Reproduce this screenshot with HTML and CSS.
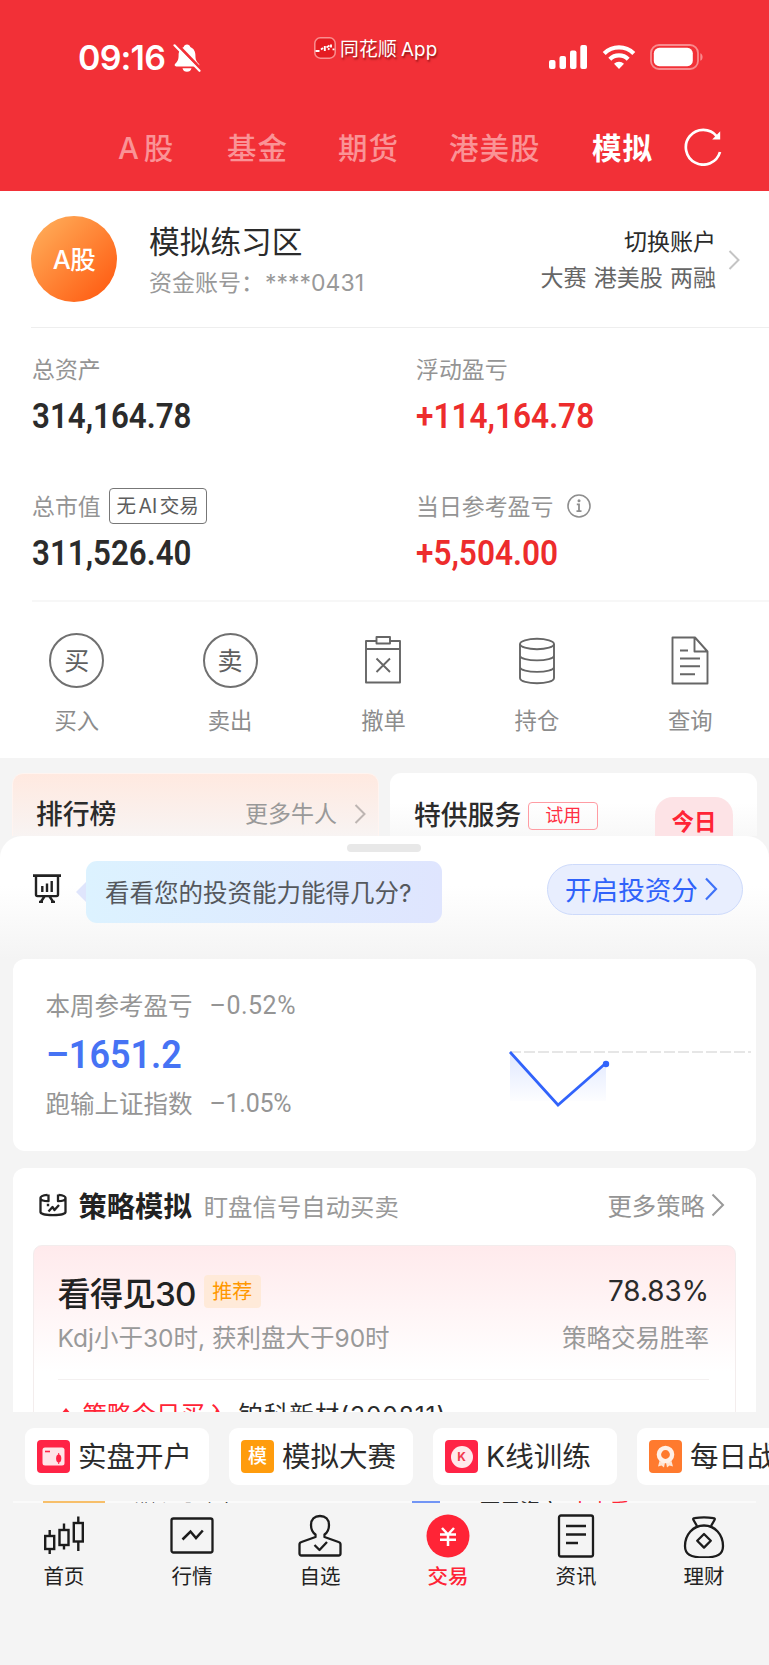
FILE: index.html
```html
<!DOCTYPE html>
<html lang="zh-CN">
<head>
<meta charset="utf-8">
<title>模拟交易</title>
<link rel="stylesheet" href="styles.css">
</head>
<body>
<div class="screen">
  <header class="top">
    <div class="status">
      <div class="clock">09:16</div>
      <svg class="bell" width="28" height="30" viewBox="0 0 28 30"><path d="M14 1.500c-1.800 0-3 1-3.300 2.400C7 5.500 5.600 8.600 5.600 12c0 5-1.200 6.500-3.400 8.800-1 1.100-.6 2.600 1 2.600h21.600c1.600 0 2-1.500 1-2.600-2.200-2.300-3.400-3.800-3.400-8.800 0-3.400-1.400-6.500-5.100-8.100C17 2.500 15.800 1.500 14 1.500zM9.500 25.200h9c-.5 2.300-2.200 3.600-4.500 3.600s-4-1.300-4.500-3.600z" fill="#fff"/><path d="M3.500.8l25 26" stroke="#f23037" stroke-width="3"/><path d="M1.500 2.300l25 25.500" stroke="#fff" stroke-width="2.200" stroke-linecap="round"/></svg>
      <div class="origin">
        <svg width="22" height="22" viewBox="0 0 22 22"><rect x=".8" y=".8" width="20.400" height="20.400" rx="5.500" fill="#e51c22" stroke="#f98f90" stroke-width="1.500"/><path d="M1.500 14h4M7 12.500l2-1.500M10.800 9v5M12.500 10.500l3-2M14 11.500l1.500 1M17 7.500v3M19.500 11.500v1.800" stroke="#fff" stroke-width="1.900" fill="none"/></svg>
        <span>同花顺 App</span>
      </div>
      <svg class="signal" width="38" height="24" viewBox="0 0 38 24" fill="#fff"><rect y="15" width="6.500" height="9" rx="2"/><rect x="10.500" y="11" width="6.500" height="13" rx="2"/><rect x="21" y="5.500" width="6.500" height="18.500" rx="2"/><rect x="31.300" width="6.700" height="24" rx="2"/></svg>
      <svg class="wifi" width="34" height="24" viewBox="0 0 34 24" fill="none" stroke="#fff" stroke-width="4.200"><path d="M2.200 8.500a21 21 0 0 1 29.600 0"/><path d="M7.800 14.200a13 13 0 0 1 18.400 0"/><path d="M17 24l-5-5.200a7.300 7.300 0 0 1 10 0z" fill="#fff" stroke="none"/></svg>
      <svg class="battery" width="54" height="26" viewBox="0 0 54 26"><rect x="1" y="1" width="47" height="24" rx="8" fill="none" stroke="#f98a8d" stroke-width="1.800"/><rect x="3.800" y="3.800" width="39" height="18.400" rx="5.500" fill="#fff"/><path d="M50.300 9.200c3 .8 3 6.800 0 7.600z" fill="#f98a8d"/></svg>
    </div>
    <nav class="markets">
      <span class="m1">A 股</span><span class="m2">基金</span><span class="m3">期货</span><span class="m4">港美股</span><span class="m5 on">模拟</span>
      <svg width="38" height="38" viewBox="0 0 38 38" fill="none" stroke="#fff" stroke-width="2.700"><path d="M36 24A17.400 17.400 0 1 1 32.800 8.300"/><path d="M36.200 3.200v8.300h-8z" fill="#fff" stroke="none"/></svg>
    </nav>
  </header>

  <section class="account">
    <div class="avatar">A股</div>
    <div class="who"><div class="name">模拟练习区</div><div class="no">资金账号：<b>****0431</b></div></div>
    <div class="switch"><div>切换账户</div><div class="kinds">大赛 港美股 两融</div></div>
    <svg width="12" height="20" viewBox="0 0 12 20" fill="none" stroke="#c4c4c4" stroke-width="2"><path d="M1.500 1l9 9-9 9"/></svg>
  </section>

  <section class="stats">
    <div class="stat"><div class="label">总资产</div><div class="num">314,164.78</div></div>
    <div class="stat"><div class="label">浮动盈亏</div><div class="num up">+114,164.78</div></div>
    <div class="stat"><div class="label">总市值<span class="ai">无 AI 交易</span></div><div class="num">311,526.40</div></div>
    <div class="stat"><div class="label">当日参考盈亏<svg class="info" width="24" height="24" viewBox="0 0 24 24" fill="none" stroke="#8e8e8e" stroke-width="1.600"><circle cx="12" cy="12" r="11"/><path d="M9.800 10.300H12V17M9.500 17.200h5" stroke-width="1.800"/><circle cx="12" cy="6.800" r="1.500" fill="#8e8e8e" stroke="none"/></svg></div><div class="num up">+5,504.00</div></div>
  </section>

  <section class="actions">
    <div class="act"><div class="pic"><div class="ring">买</div></div>买入</div>
    <div class="act"><div class="pic"><div class="ring">卖</div></div>卖出</div>
    <div class="act"><div class="pic"><svg width="38" height="50" viewBox="0 0 38 50" fill="none" stroke="#666" stroke-width="1.900" stroke-linejoin="round"><path d="M12 6H2v41.500h34V6H26M2 14h34"/><rect x="12.500" y="2" width="13.500" height="6.500"/><path d="M12.500 23.500l13.500 13.500M26 23.500L12.500 37"/></svg></div>撤单</div>
    <div class="act"><div class="pic"><svg width="38" height="50" viewBox="0 0 38 50" fill="none" stroke="#666" stroke-width="1.900"><ellipse cx="19" cy="9" rx="17" ry="5.200"/><path d="M2 9v34c0 7 34 7 34 0V9M2 20.500c0 6.500 34 6.500 34 0M2 32c0 6.500 34 6.500 34 0"/></svg></div>持仓</div>
    <div class="act"><div class="pic"><svg width="38" height="50" viewBox="0 0 38 50" fill="none" stroke="#666" stroke-width="1.900" stroke-linejoin="round"><path d="M1.500 2.500h22.500L36.500 16.500v32H1.500zM23.500 2.500v14h13"/><path d="M9 15.500h8M9 23.500h20M9 31.200h20M9 39.200h15"/></svg></div>查询</div>
  </section>

  <section class="promos">
    <div class="promo rank"><strong>排行榜</strong><span>更多牛人</span><svg width="12" height="20" viewBox="0 0 12 20" fill="none" stroke="#bdb5b2" stroke-width="2"><path d="M1.500 1l9 9-9 9"/></svg></div>
    <div class="promo serve"><strong>特供服务</strong><em>试用</em><div class="today">今日</div></div>
  </section>

  <section class="sheet">
    <div class="grip"></div>
    <div class="quiz">
      <svg class="board" width="28" height="29" viewBox="0 0 28 29" fill="none" stroke="#222" stroke-width="2.400"><path d="M0 1.700h28" stroke-width="2.800"/><path d="M3 2v18.500c0 1 .5 1.600 1.500 1.600h19c1 0 1.500-.6 1.500-1.600V2M11.500 22.500l-4 5.700M16.500 22.500l4 5.700M6 28h4M18 28h4"/><path d="M9.300 12v6M14 9.500V18M18.700 7v11"/></svg>
      <svg class="beak" width="10" height="20" viewBox="0 0 10 20"><path d="M10 0v20L0 10z" fill="#dfe5fc"/></svg>
      <div class="bubble">看看您的投资能力能得几分?</div>
      <div class="open">开启投资分<svg width="14" height="24" viewBox="0 0 14 24" fill="none" stroke="#3f72f8" stroke-width="2.200"><path d="M2 1.500L12 12 2 22.500"/></svg></div>
    </div>

    <div class="card week">
      <div class="figures">
        <div class="line">本周参考盈亏<i>–0.52%</i></div>
        <div class="loss">–1651.2</div>
        <div class="line">跑输上证指数<i class="tight">–1.05%</i></div>
      </div>
      <svg width="243" height="62" viewBox="0 0 243 62"><defs><linearGradient id="fade" x1="0" y1="0" x2="0" y2="1"><stop stop-color="#e0e8ff"/><stop offset="1" stop-color="#fff"/></linearGradient></defs><path d="M2 6v48h96V18L50 58z" fill="url(#fade)"/><path d="M2 5h241" stroke="#e6e6e6" stroke-width="2.200" stroke-dasharray="11 3"/><path d="M2 5l48 53 48-42" fill="none" stroke="#3163fb" stroke-width="2.700"/><circle cx="98" cy="17" r="3.200" fill="#3163fb"/></svg>
    </div>

    <div class="card plan">
      <div class="plan-head">
        <svg width="28" height="24" viewBox="0 0 28 24" fill="none" stroke="#222" stroke-width="2.300" stroke-linejoin="round"><path d="M8.500 1.800C5 2.200 1.500 3 1.500 4.800V19c0 4.200 25 4.200 25 0V4.800c0-1.800-3.500-2.600-7-3M1.500 5c0 2.500 5 3.200 8 3.200V1.500M26.500 5c0 2.500-4.500 3.200-7.500 3.200V1.500"/><path d="M9.500 18.500l4-4.500 2 3 4.500-5M7.800 12h2.400"/></svg>
        <strong>策略模拟</strong><span class="hint">盯盘信号自动买卖</span><span class="more">更多策略</span>
        <svg width="14" height="24" viewBox="0 0 14 24" fill="none" stroke="#999" stroke-width="2"><path d="M1.500 1.500L12 12 1.500 22.500"/></svg>
      </div>
      <div class="tip">
        <div class="row r1"><span class="title">看得见30</span><span class="tag">推荐</span><span class="rate">78.83%</span></div>
        <div class="row r2"><span class="rule">Kdj小于30时, 获利盘大于90时</span><span>策略交易胜率</span></div>
        <div class="row r3"><svg width="16" height="20" viewBox="0 0 16 20"><path d="M8 4l6 7-6 7-6-7z" fill="#ff2436"/></svg><span class="buy">策略今日买入</span><span class="stock">铂科新材(300811)</span></div>
      </div>
    </div>
  </section>

  <section class="chips">
    <div class="chip"><svg width="33" height="33" viewBox="0 0 33 33"><rect width="33" height="33" rx="4" fill="#ff2346"/><rect x="5.500" y="7.500" width="22" height="18" rx="2.500" fill="#ffe5e9"/><path d="M8 11.500h5" stroke="#ff2346" stroke-width="1.600"/><ellipse cx="21.700" cy="18.500" rx="2.600" ry="4" fill="#ff2346"/><path d="M21.700 13v11" stroke="#ff2346"/></svg>实盘开户</div>
    <div class="chip"><div class="mo">模</div>模拟大赛</div>
    <div class="chip"><div class="kk"><b>K</b></div>K线训练</div>
    <div class="chip"><svg width="33" height="33" viewBox="0 0 33 33"><rect width="33" height="33" rx="4" fill="#ff7a2e"/><path d="M10.500 21l-1.500 5.500 3.500-1 2.500 2 1-5M22.500 21l1.500 5.500-3.500-1-2.500 2-1-5" fill="#ffe4d3"/><circle cx="16.500" cy="14.500" r="6.600" fill="none" stroke="#fff0e7" stroke-width="4.400" /></svg>每日战报</div>
  </section>

  <div class="peek">
    <div class="peek-in"><span class="p1"></span><span class="p2">模拟炒股大赛</span><span class="p3"></span><span class="p4">可用资产</span><span class="p5">去查看</span></div>
  </div>

  <nav class="tabs">
    <div class="tab"><svg width="44" height="44" viewBox="0 0 44 44" fill="none" stroke="#1c1c1c" stroke-width="2.400"><rect x="3.200" y="22" width="9" height="13"/><rect x="17.500" y="16" width="9" height="15"/><rect x="31.800" y="9" width="9" height="18.500"/><path d="M7.700 16v6M7.700 35v5M22 9.500V16M22 31v4.500M36.300 2.500V9M36.300 27.500v9.500"/></svg>首页</div>
    <div class="tab"><svg width="44" height="44" viewBox="0 0 44 44" fill="none" stroke="#1c1c1c" stroke-width="2.300"><rect x="1.500" y="4.500" width="41" height="34" rx="2"/><path d="M12.500 25.500l8-8 5.500 6.500 6.800-7.500" stroke-width="2.500"/></svg>行情</div>
    <div class="tab"><svg width="44" height="44" viewBox="0 0 44 44" fill="none" stroke="#1c1c1c" stroke-width="2.300" stroke-linejoin="round"><path d="M17.500 20.500c-3-2-4.500-5-4.500-9.500 0-5.500 3.500-9 9-9s9 3.500 9 9c0 4.500-1.500 7.500-4.500 9.500v2.500L40.500 28c1.300.4 2 1.200 2 2.500v9c0 1.300-.7 2-2 2h-37c-1.300 0-2-.7-2-2v-9c0-1.300.7-2.100 2-2.500L17.500 23z"/><path d="M16.500 31l5 5 7.500-8"/></svg>自选</div>
    <div class="tab on"><svg width="44" height="44" viewBox="0 0 44 44" fill="none" stroke="#fff" stroke-width="2.500"><circle cx="22" cy="22" r="21.500" fill="#ff2436" stroke="none"/><path d="M16 14l6 6.500 6-6.500M14 20.500h16M14 25.800h16M22 20v12"/></svg>交易</div>
    <div class="tab"><svg width="44" height="44" viewBox="0 0 44 44" fill="none" stroke="#1c1c1c" stroke-width="2.300"><rect x="5" y="1.500" width="34" height="41" rx="2"/><path d="M12 12h20M12 20.500h20M12 29h12"/></svg>资讯</div>
    <div class="tab"><svg width="44" height="44" viewBox="0 0 44 44" fill="none" stroke="#1c1c1c" stroke-width="2.300" stroke-linejoin="round"><path d="M15 12L11.500 6c-.7-1.200 0-1.800 1-1.900 6-.8 13-.8 19 0 1 .1 1.700.7 1 1.900L29 12"/><path d="M22 11.500c-11 0-19 9-19 20.500 0 8 5 11.500 19 11.500S41 40 41 32c0-11.500-8-20.500-19-20.500z"/><path d="M22 20l6.800 6.800L22 33.600l-6.800-6.800z"/></svg>理财</div>
  </nav>
</div>
</body>
</html>
```
FILE: styles.css
```css
* { box-sizing: border-box; }
body { margin: 0; background: #f4f4f4; }
svg { display: block; flex: none; }
i, em { font-style: normal; }
.screen {
  width: 769px; height: 1665px; overflow: hidden;
  display: flex; flex-direction: column;
  font-family: Inter, "Noto Sans CJK SC", sans-serif;
  color: #2b2b2b; white-space: nowrap;
}
.screen > * { flex: none; }

.top { height: 191px; background: #f23037; color: #fff; }
.status { height: 110px; padding: 37px 65px 0 78px; display: flex; align-items: flex-start; }
.clock { width: 95px; margin-top: 1px; font-size: 34px; line-height: 40px; font-weight: 600; letter-spacing: -0.8px; }
.bell { margin-top: 6px; }
.origin { margin-left: 113px; display: flex; gap: 4px; font-size: 18.800px; line-height: 26px; text-shadow: 1px 2px 2px rgba(80, 0, 0, .6); }
.origin span { word-spacing: -1.500px; letter-spacing: .2px; }
.signal { margin: 8px 0 0 auto; }
.wifi { margin: 8px 14px 0 15px; }
.battery { margin-top: 7px; }

.markets { height: 81px; display: flex; padding: 18px 0 0 118px; font-size: 29.500px; line-height: 41px; letter-spacing: 1px; font-weight: 500; color: #fa9396; }
.markets .on { color: #fff; font-weight: 600; }
.m1 { width: 109px; word-spacing: -5px; }
.m2, .m3 { width: 111px; }
.m4 { width: 143px; }
.m5 { width: 92px; }

.account { height: 137px; margin-left: 31px; padding: 25px 29px 0 0; border-bottom: 1px solid #eee; background: #fff; box-shadow: -31px 0 #fff; display: flex; }
.avatar { width: 86px; height: 86px; border-radius: 50%; background: linear-gradient(135deg, #ffa552 15%, #ff5e14 90%); color: #fff; font-size: 25.500px; font-weight: 500; letter-spacing: -.6px; line-height: 87px; text-align: center; }
.who { margin-left: 32px; flex: 1; }
.name { font-size: 30.700px; line-height: 40px; margin-top: 6px; }
.no { font-size: 23px; line-height: 32px; margin-top: 5px; color: #999; }
.no b { font-weight: 400; letter-spacing: 0; margin-left: 1px; }
.switch { text-align: right; font-size: 23px; line-height: 32px; padding-top: 10px; }
.kinds { margin-top: 4px; color: #666; word-spacing: .8px; }
.account > svg { margin: 34px 0 0 12px; }

.stats { height: 274px; margin-left: 32px; padding-top: 23px; border-bottom: 2px solid #f7f7f7; box-shadow: -32px 0 #fff; background: #fff; display: grid; grid-template-columns: 384px 1fr; grid-template-rows: 137px 1fr; }
.label { height: 34px; display: flex; align-items: center; font-size: 22.900px; color: #949494; }
.num { font: 600 35px/44px Roboto, sans-serif; margin-top: 10px; transform: scaleX(.895); transform-origin: 0 50%; }
.up { color: #ed2c2c; transform: scaleX(.903); }
.ai { margin: 1px 0 0 8px; width: 98px; height: 36px; border: 1.500px solid #777; border-radius: 4px; text-align: center; font-size: 19.500px; line-height: 35px; word-spacing: -3px; color: #5c5c5c; }
.info { margin: 1px 0 0 14px; }

.actions { height: 156px; background: #fff; padding-right: 2px; display: grid; grid-template-columns: repeat(5, 1fr); }
.act { display: flex; flex-direction: column; align-items: center; font-size: 22.300px; line-height: 32px; color: #8c8c8c; }
.pic { height: 103px; padding-top: 13px; display: flex; align-items: center; }
.ring { width: 55px; height: 55px; border: 2px solid #707070; border-radius: 50%; font-size: 25px; line-height: 53px; text-align: center; color: #606060; }

.promos { height: 78px; padding: 15px 12px 0; display: flex; gap: 11px; overflow: hidden; }
.promo { width: 367px; height: 90px; border-radius: 11px; display: flex; align-items: flex-start; }
.promo strong { font-size: 26.800px; line-height: 40px; font-weight: 500; }
.rank { background: linear-gradient(#ffe9e0, #f8f4f3 63px); border: 1px solid #fff4f0; padding: 20px 12px 0 23px; }
.rank span { margin: 4px 17px 0 auto; font-size: 23px; line-height: 32px; color: #999; }
.rank svg { margin-top: 10px; }
.serve { background: linear-gradient(#fff 30px, #f8f8f8 63px); padding: 22px 24px 0 24px; }
.serve em { margin: 7px 0 0 7px; width: 70px; height: 28px; border: 1.500px solid #ff9ca3; border-radius: 4px; color: #ff2f43; font-size: 18px; line-height: 26px; text-align: center; }
.today { margin: 2px 0 0 auto; width: 78px; height: 70px; border-radius: 18px; background: #fde3e6; color: #ff2436; font-size: 22.500px; font-weight: 700; line-height: 50px; text-align: center; }

.sheet { height: 576px; overflow: hidden; border-radius: 22px 22px 0 0; background: linear-gradient(#fff 50px, #f4f4f4 123px); padding: 0 13px 0 12.500px; }
.grip { width: 74px; height: 8px; margin: 8px auto 0; border-radius: 4px; background: #e8e8e8; }
.quiz { height: 107px; padding: 9px 13px 0 20.500px; display: flex; align-items: flex-start; }
.board { margin-top: 13px; }
.beak { margin: 21px 0 0 15px; }
.bubble { width: 356px; height: 62px; border-radius: 11px; padding-left: 19px; background: linear-gradient(90deg, #dcf2ff, #dfe5fe); font-size: 24.500px; line-height: 64px; color: #55585d; }
.open { margin: 3px 0 0 auto; width: 196px; height: 51px; border-radius: 26px; border: 1.500px solid #cddafb; background: #e8eefe; color: #2f62fa; font-size: 26.600px; line-height: 46px; padding-left: 17px; display: flex; align-items: center; gap: 6px; }
.open svg { margin-top: -2px; }

.card { background: #fff; border-radius: 12px; }
.week { height: 192px; padding: 31px 5px 0 33px; display: flex; justify-content: space-between; color: #959595; }
.line { font-size: 24.500px; line-height: 32px; display: flex; }
.line i { font-family: Roboto, sans-serif; font-size: 25px; margin-left: 17px; letter-spacing: .5px; }
.line .tight { letter-spacing: -.3px; }
.loss { font: 600 39.500px/50px Roboto, sans-serif; color: #4673f4; margin: 8px 0; transform: scaleX(.91); transform-origin: 0 50%; }
.week > svg { margin-top: 57px; }

.plan { height: 300px; margin-top: 17px; padding: 0 20px; }
.plan-head { height: 77px; padding-left: 6px; display: flex; align-items: center; }
.plan-head strong { font-size: 28.300px; font-weight: 700; margin: -4px 0 0 12px; color: #222; }
.hint { font-size: 24.400px; margin: -2px 0 0 12px; color: #999; }
.more { margin: -4px 0 0 auto; font-size: 24.400px; color: #949494; }
.plan-head svg:last-child { margin: -3px 11px 0 6px; }
.plan-head svg:first-child { margin-top: -4px; }
.tip { height: 230px; border: 1px solid #f3eded; border-radius: 9px 9px 0 0; background: linear-gradient(#ffeaec, #fff 125px); padding: 0 26px 0 24px; }
.row { display: flex; }
.r1 { height: 75px; padding-top: 26px; }
.title { font-size: 33.200px; line-height: 44px; font-weight: 500; letter-spacing: -.7px; color: #222; }
.tag { margin: 3px 0 0 8px; width: 57px; height: 33px; border-radius: 4px; background: #ffead9; color: #ff9800; font-size: 20px; line-height: 34px; text-align: center; }
.rate { margin: 1px 0 0 auto; font-size: 27.800px; line-height: 36px; color: #2b2b2b; }
.r2 { height: 59px; justify-content: space-between; font-size: 24.500px; line-height: 34px; color: #999; border-bottom: 1px solid #f3f0f0; }
.r3 { padding-top: 18px; font-size: 24.500px; line-height: 34px; }
.r3 svg { margin-top: 6px; }
.buy { margin-left: 9px; color: #ff2436; }
.stock { margin-left: 9px; letter-spacing: .9px; }

.chips { height: 89px; padding: 16px 0 0 25px; display: flex; gap: 20px; background: #f4f4f4; overflow: hidden; }
.chip { flex: none; width: 184px; height: 57px; border-radius: 9px; background: #fff; padding-left: 12px; display: flex; align-items: center; gap: 8px; font-size: 28.500px; line-height: 57px; }
.mo { width: 33px; height: 33px; border-radius: 4px; background: #ff9c0d; color: #fff; font-size: 19px; line-height: 33px; text-align: center; font-weight: 500; }
.kk { width: 33px; height: 33px; border-radius: 4px; background: #ff2346; padding: 5.500px; }
.kk b { display: block; width: 22px; height: 22px; border-radius: 50%; background: #ffe9ec; color: #f23a50; font-size: 12px; line-height: 22px; text-align: center; }

.peek { height: 2px; overflow: hidden; padding: 0 13px; }
.peek-in { height: 40px; background: #fafafa; display: flex; font-size: 20px; line-height: 28px; }
.peek-in span { height: 28px; margin-top: -4px; }
.p1 { width: 62px; margin-left: 30px; background: #f7bf6a; }
.p2 { margin-left: 28px; font-size: 17px; }
.p3 { width: 28px; margin-left: 177px; background: #7295f5; }
.p4 { margin-left: 40px; }
.p5 { margin-left: 10px; color: #ff2436; }

.tabs { height: 162px; padding-right: 1px; display: grid; grid-template-columns: repeat(6, 1fr); background: #f4f4f4; }
.tab { padding-top: 11px; display: flex; flex-direction: column; align-items: center; font-size: 20.500px; line-height: 38px; color: #222; }
.tab.on { color: #ff2436; font-weight: 500; }
```
